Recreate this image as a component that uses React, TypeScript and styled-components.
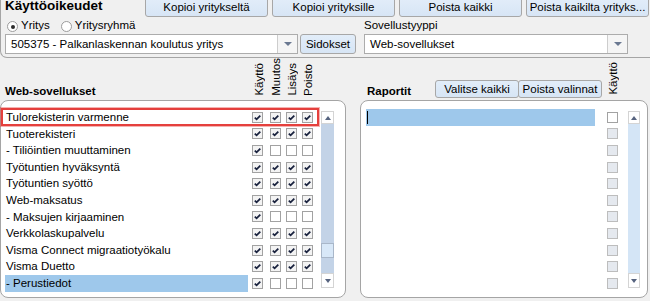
import styled, { createGlobalStyle } from "styled-components";

const GlobalStyle = createGlobalStyle`
	html, body {
		margin: 0;
		padding: 0;
		background: #f0f0f0;
	}
	body {
		font-family: "Liberation Sans", Arial, sans-serif;
		font-size: 11.5px;
		color: #000;
	}
`;

const apps = [
	{ name: "Tulorekisterin varmenne", rights: [1, 1, 1, 1], marked: true },
	{ name: "Tuoterekisteri", rights: [1, 1, 1, 1] },
	{ name: "- Tiliöintien muuttaminen", rights: [1, 0, 0, 0] },
	{ name: "Työtuntien hyväksyntä", rights: [1, 1, 1, 1] },
	{ name: "Työtuntien syöttö", rights: [1, 1, 1, 1] },
	{ name: "Web-maksatus", rights: [1, 1, 1, 1] },
	{ name: "- Maksujen kirjaaminen", rights: [1, 0, 0, 0] },
	{ name: "Verkkolaskupalvelu", rights: [1, 1, 1, 1] },
	{ name: "Visma Connect migraatiotyökalu", rights: [1, 1, 1, 1] },
	{ name: "Visma Duetto", rights: [1, 1, 1, 1] },
	{ name: "- Perustiedot", rights: [1, 0, 0, 0], selected: true },
];

const rightHeads = ["Käyttö", "Muutos", "Lisäys", "Poisto"];

const Check = () => (
	<svg width="9" height="9" viewBox="0 0 9 9">
		<path d="M1.8 4.6L3.6 6.3L7.3 2.6" fill="none" stroke="#18213d" strokeWidth="1.8" />
	</svg>
);

const App = () => (
	<Screen>
		<GlobalStyle />
		<TopPanel>
			<TitleRow>
				<Title>Käyttöoikeudet</Title>
				<ToolButton>Kopioi yritykseltä</ToolButton>
				<ToolButton>Kopioi yrityksille</ToolButton>
				<ToolButton>Poista kaikki</ToolButton>
				<ToolButton>Poista kaikilta yrityks...</ToolButton>
			</TitleRow>
			<FieldGrid>
				<RadioRow>
					<Radio $on />
					<RadioLabel>Yritys</RadioLabel>
					<Radio />
					<RadioLabel>Yritysryhmä</RadioLabel>
				</RadioRow>
				<FieldLabel>Sovellustyyppi</FieldLabel>
				<ComboRow>
					<Combo $w={293}>
						<ComboText>505375 - Palkanlaskennan koulutus yritys</ComboText>
						<ComboDrop />
					</Combo>
					<SmallButton $w={56}>Sidokset</SmallButton>
				</ComboRow>
				<Combo $w={264}>
					<ComboText>Web-sovellukset</ComboText>
					<ComboDrop />
				</Combo>
			</FieldGrid>
		</TopPanel>

		<HeadRow>
			<AppsHead>
				<SectionLabel>Web-sovellukset</SectionLabel>
				{rightHeads.map(h => (
					<ColHead key={h}><VerticalText>{h}</VerticalText></ColHead>
				))}
			</AppsHead>
			<ReportsHead>
				<SectionLabel $w={68}>Raportit</SectionLabel>
				<SmallButton $w={84} $h={18}>Valitse kaikki</SmallButton>
				<SmallButton $w={84} $h={18} $join>Poista valinnat</SmallButton>
				<ReportColHead><VerticalText>Käyttö</VerticalText></ReportColHead>
			</ReportsHead>
		</HeadRow>

		<PanelRow>
			<ListPanel $w={346} $pad={4}>
				<Rows>
					{apps.map(app => (
						<AppRow key={app.name}>
							<RowName $selected={!!app.selected}>{app.name}</RowName>
							{app.rights.map((r, i) => (
								<BoxCell key={i}>
									<CheckBox $checked={!!r}>{r ? <Check /> : null}</CheckBox>
								</BoxCell>
							))}
							{app.marked && <Marker />}
						</AppRow>
					))}
				</Rows>
				<ScrollBar $gap={7} $w={13}>
					<ScrollButton $h={13}><ArrowUp /></ScrollButton>
					<Track $dark>
						<Thumb />
					</Track>
					<ScrollButton $h={15}><ArrowDown /></ScrollButton>
				</ScrollBar>
			</ListPanel>
			<ListPanel $w={288} $pad={5}>
				<Rows>
					{Array.from({ length: 11 }).map((_, i) => (
						<ReportRow key={i}>
							<RowName $selected={i === 0}>{i === 0 && <Caret />}</RowName>
							<CheckBox $checked={false} $disabled={i > 0} />
						</ReportRow>
					))}
				</Rows>
				<ScrollBar $gap={10} $w={12}>
					<ScrollButton $h={13}><ArrowUp /></ScrollButton>
					<Track />
					<ScrollButton $h={15}><ArrowDown /></ScrollButton>
				</ScrollBar>
			</ListPanel>
		</PanelRow>
	</Screen>
);

const Screen = styled.div`
	width: 650px;
	height: 301px;
	overflow: hidden;
	display: flex;
	flex-direction: column;
`;

const TopPanel = styled.div`
	flex: none;
	width: 662px;
	margin-top: -3px;
	padding: 0 0 3px 4px;
	box-sizing: border-box;
	border: 1px solid #a5a5a5;
	border-top: none;
	border-radius: 0 0 7px 7px;
`;

const TitleRow = styled.div`
	height: 20px;
	display: flex;
	align-items: center;
	gap: 4px;
`;

const Title = styled.div`
	width: 136px;
	font-size: 13.5px;
	font-weight: bold;
	line-height: 20px;
	margin-top: -3px;
`;

const buttonFace = `
	box-sizing: border-box;
	border: 1px solid #a7a7a7;
	border-radius: 3px;
	background: linear-gradient(#e2edf9, #d7e5f5);
	font-family: "Liberation Sans", Arial, sans-serif;
	font-size: 11.5px;
	color: #000;
	padding: 0;
	white-space: nowrap;
	overflow: hidden;
`;

const ToolButton = styled.button`
	${buttonFace}
	flex: none;
	width: 123px;
	height: 20px;
`;

const SmallButton = styled.button<{ $w: number; $h?: number; $join?: boolean }>`
	${buttonFace}
	flex: none;
	width: ${p => p.$w}px;
	height: ${p => p.$h ?? 20}px;
	margin-left: ${p => (p.$join ? -1 : 0)}px;
`;

const FieldGrid = styled.div`
	display: grid;
	grid-template-columns: 359px 1fr;
	grid-template-rows: 17px 20px;
`;

const RadioRow = styled.div`
	display: flex;
	align-items: center;
	padding-left: 2px;
	line-height: 17px;
`;

const Radio = styled.span<{ $on?: boolean }>`
	width: 11px;
	height: 11px;
	box-sizing: border-box;
	border-radius: 50%;
	border: 1px solid #9c9c9c;
	background: #fff;
	display: inline-flex;
	align-items: center;
	justify-content: center;
	margin-top: 2px;

	&::after {
		content: "";
		width: 4px;
		height: 4px;
		border-radius: 50%;
		background: #2b2b2b;
		display: ${p => (p.$on ? "block" : "none")};
	}
`;

const RadioLabel = styled.span`
	margin: 0 11px 0 3px;
`;

const FieldLabel = styled.div`
	line-height: 17px;
`;

const ComboRow = styled.div`
	display: flex;
	gap: 2px;
`;

const Combo = styled.div<{ $w: number }>`
	width: ${p => p.$w}px;
	height: 20px;
	box-sizing: border-box;
	border: 1px solid #acacac;
	background: #fff;
	display: flex;
`;

const ComboText = styled.span`
	flex: 1;
	padding-left: 5px;
	line-height: 18px;
	white-space: nowrap;
	overflow: hidden;
`;

const ComboDrop = styled.span`
	width: 19px;
	border-left: 1px solid #cdcdcd;
	background: #f5f5f5;
	display: flex;
	align-items: center;
	justify-content: center;

	&::after {
		content: "";
		border-left: 4px solid transparent;
		border-right: 4px solid transparent;
		border-top: 4px solid #6a7891;
	}
`;

const HeadRow = styled.div`
	flex: none;
	height: 42px;
	display: flex;
	gap: 14px;
`;

const AppsHead = styled.div`
	width: 346px;
	padding-left: 5px;
	box-sizing: border-box;
	display: grid;
	grid-template-columns: 243px 18px 16px 16px 16px;
	align-items: end;
`;

const SectionLabel = styled.div<{ $w?: number }>`
	flex: none;
	width: ${p => (p.$w ? `${p.$w}px` : "auto")};
	padding: 0 0 2px 0;
	font-weight: bold;
	line-height: 14px;
`;

const ColHead = styled.div`
	padding: 0 0 4px 4px;
	display: flex;
	justify-content: center;
`;

const VerticalText = styled.span`
	writing-mode: vertical-rl;
	transform: rotate(180deg);
	line-height: 12px;
	white-space: nowrap;
`;

const ReportsHead = styled.div`
	width: 288px;
	padding-left: 7px;
	box-sizing: border-box;
	display: flex;
	align-items: flex-end;

	button {
		margin-bottom: 2px;
	}
`;

const ReportColHead = styled.div`
	width: 11px;
	margin-left: 5px;
	padding-bottom: 5px;
	display: flex;
	justify-content: center;
`;

const PanelRow = styled.div`
	flex: none;
	height: 198px;
	display: flex;
	gap: 14px;
`;

const ListPanel = styled.div<{ $w: number; $pad: number }>`
	width: ${p => p.$w}px;
	height: 100%;
	box-sizing: border-box;
	border: 1px solid #a5a5a5;
	border-radius: 8px;
	background: #fff;
	padding: 8px 0 0 ${p => p.$pad}px;
	display: flex;
	align-items: flex-start;
`;

const Rows = styled.div`
	display: flex;
	flex-direction: column;
`;

const AppRow = styled.div`
	position: relative;
	height: 16.6px;
	display: grid;
	grid-template-columns: 243px 18px 16px 16px 16px;
	align-items: center;
`;

const ReportRow = styled.div`
	height: 16.6px;
	display: grid;
	grid-template-columns: 229px 11px;
	column-gap: 12px;
	align-items: center;
`;

const RowName = styled.div<{ $selected: boolean }>`
	height: 100%;
	padding-left: 1px;
	line-height: 16.6px;
	white-space: nowrap;
	overflow: hidden;
	display: flex;
	align-items: center;
	background: ${p => (p.$selected ? "#9ec8eb" : "transparent")};
`;

const Caret = styled.span`
	width: 1px;
	height: 13px;
	background: #000;
`;

const BoxCell = styled.div`
	padding-left: 4px;
	display: flex;
`;

const CheckBox = styled.span<{ $checked: boolean; $disabled?: boolean }>`
	width: 11px;
	height: 11px;
	box-sizing: border-box;
	border: 1px solid ${p => (p.$disabled ? "#bdbdbd" : "#a2a2a2")};
	background: ${p => (p.$disabled ? "#e5e9ef" : p.$checked ? "#f3f3f3" : "#fff")};
	display: flex;
	align-items: center;
	justify-content: center;
`;

const Marker = styled.span`
	position: absolute;
	left: -4px;
	top: -1px;
	width: 318px;
	height: 18px;
	box-sizing: border-box;
	border: 2px solid #e5403d;
	box-shadow: 0 0 0 1px rgba(229, 64, 61, 0.4);
	pointer-events: none;
`;

const ScrollBar = styled.div<{ $gap: number; $w: number }>`
	width: ${p => p.$w}px;
	height: 177px;
	margin: 2px 0 0 ${p => p.$gap}px;
	display: flex;
	flex-direction: column;
`;

const ScrollButton = styled.div<{ $h: number }>`
	height: ${p => p.$h}px;
	box-sizing: border-box;
	border: 1px solid #d4d4d4;
	background: #fff;
	display: flex;
	align-items: center;
	justify-content: center;
`;

const ArrowUp = styled.span`
	border-left: 3.5px solid transparent;
	border-right: 3.5px solid transparent;
	border-bottom: 4px solid #56637f;
`;

const ArrowDown = styled.span`
	border-left: 3.5px solid transparent;
	border-right: 3.5px solid transparent;
	border-top: 4px solid #56637f;
`;

const Track = styled.div<{ $dark?: boolean }>`
	flex: 1;
	background: ${p => (p.$dark ? "#c3d3e7" : "#d4e5f6")};
	display: flex;
	flex-direction: column;
	justify-content: flex-end;
	padding-bottom: 15px;
`;

const Thumb = styled.div`
	height: 15px;
	box-sizing: border-box;
	border: 1px solid #a9b7c9;
	background: #d8e8f8;
`;

export default App;
